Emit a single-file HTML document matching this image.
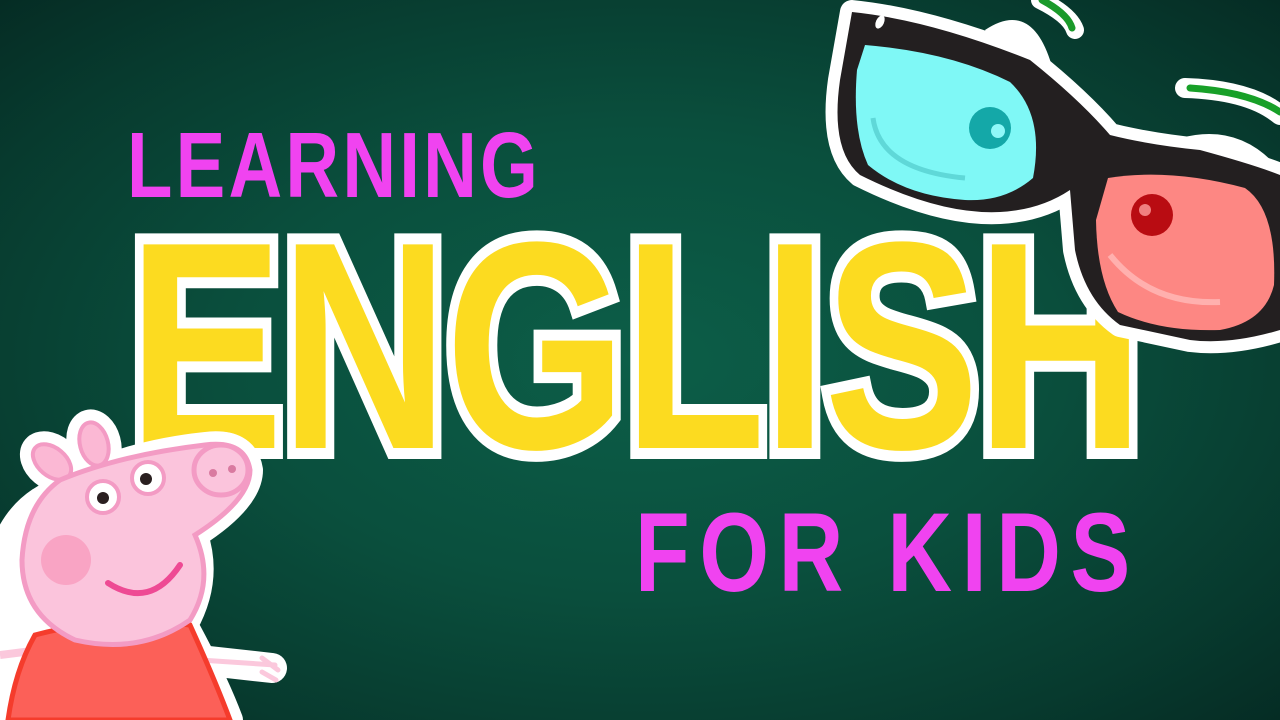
<!DOCTYPE html>
<html><head><meta charset="utf-8"><style>
html,body{margin:0;padding:0}
body{width:1280px;height:720px;overflow:hidden;position:relative;
background:radial-gradient(ellipse at 50% 50%,#0c5e48 0%,#0a4f3d 45%,#073a2e 80%,#052c24 100%);
font-family:"Liberation Sans",sans-serif}
.t{position:absolute;white-space:nowrap;line-height:1;transform-origin:0 0}
#learn{left:127px;top:119px;font-size:93px;color:#f043f0;letter-spacing:4px;font-weight:bold;transform:scaleX(0.8)}
#kids{left:635px;top:497px;font-size:112px;color:#f043f0;letter-spacing:12px;font-weight:bold;transform:scaleX(0.8)}
#eng{left:128px;top:198px;font-size:296px;font-weight:bold;color:#fcdb20;
-webkit-text-stroke:22px #fff;paint-order:stroke fill;transform:scaleX(0.787);letter-spacing:-4px}
svg{position:absolute;left:0;top:0}
</style></head><body>
<div class="t" id="learn">LEARNING</div>
<div class="t" id="eng">ENGLISH</div>
<div class="t" id="kids">FOR KIDS</div>
<svg width="1280" height="720" viewBox="0 0 1280 720">
 <path d="M1040 0 Q1070 15 1075 30" stroke="#fff" stroke-width="18" fill="none" stroke-linecap="round"/>
 <path d="M1042 0 Q1068 14 1072 28" stroke="#1a9a2a" stroke-width="7" fill="none" stroke-linecap="round"/>
 <path d="M1185 88 Q1250 90 1280 115" stroke="#fff" stroke-width="20" fill="none" stroke-linecap="round"/>
 <path d="M1190 88 Q1250 92 1280 112" stroke="#18a028" stroke-width="7" fill="none" stroke-linecap="round"/>
 <path d="M985 30 Q1030 0 1050 60 Q1060 100 1090 120 L1040 120 Z" fill="#fff"/>
 <path d="M1150 150 Q1230 110 1280 170 L1280 200 L1160 175 Z" fill="#fff"/>
 <g stroke-linejoin="round">
  <path d="M852 12 Q930 20 1030 60 Q1080 100 1110 135 Q1150 145 1200 150 Q1255 165 1280 175 L1280 330 Q1230 345 1190 340 L1120 325 Q1085 300 1075 250 L1070 190 Q1040 210 1000 212 Q940 215 860 175 Q830 150 840 80 Z" fill="#fff" stroke="#fff" stroke-width="24"/>
  <path d="M852 12 Q930 20 1030 60 Q1080 100 1110 135 Q1150 145 1200 150 Q1255 165 1280 175 L1280 330 Q1230 345 1190 340 L1120 325 Q1085 300 1075 250 L1070 190 Q1040 210 1000 212 Q940 215 860 175 Q830 150 840 80 Z" fill="#231f20"/>
  <path d="M865 45 Q950 52 1010 82 Q1045 115 1033 178 Q1005 202 965 200 Q905 196 868 165 Q852 130 857 70 Z" fill="#7ff8f6"/>
  <path d="M873 118 Q880 170 965 178" stroke="#5fd8d8" stroke-width="5" fill="none"/>
  <circle cx="990" cy="128" r="21" fill="#14a8a8"/><circle cx="998" cy="131" r="7" fill="#8ff8f8"/>
  <path d="M1108 178 Q1170 168 1245 188 Q1277 210 1274 285 Q1265 322 1220 330 Q1160 332 1118 312 Q1097 280 1096 220 Z" fill="#fd8783"/>
  <path d="M1110 255 Q1150 305 1220 302" stroke="#ffb0ae" stroke-width="6" fill="none"/>
  <circle cx="1152" cy="215" r="21" fill="#b90c12"/><circle cx="1145" cy="210" r="6" fill="#f08080"/>
  <ellipse cx="880" cy="22" rx="4" ry="7" fill="#fff" transform="rotate(25 880 22)"/>
 </g>
 <g fill="#fff" stroke="#fff" stroke-width="26" stroke-linejoin="round" stroke-linecap="round">
  <ellipse cx="52" cy="462" rx="22" ry="14" transform="rotate(40 52 462)"/>
  <ellipse cx="94" cy="444" rx="14" ry="22" transform="rotate(-15 94 444)"/>
  <path d="M40 500 Q110 455 205 445 Q245 440 250 470 Q250 500 195 535 Q210 580 185 625 Q215 680 230 720 L0 720 L0 560 Q10 520 40 500 Z"/>
  <ellipse cx="221" cy="470" rx="27" ry="25"/>
  <path d="M200 660 L272 668" stroke-width="30" fill="none"/>
 </g>
 <g>
  <ellipse cx="52" cy="462" rx="22" ry="14" fill="#fbb8d4" stroke="#f39bc4" stroke-width="4" transform="rotate(40 52 462)"/>
  <ellipse cx="94" cy="444" rx="14" ry="22" fill="#fbb8d4" stroke="#f39bc4" stroke-width="4" transform="rotate(-15 94 444)"/>
  <path d="M200 660 L275 665 M262 658 L278 670 M262 672 L276 680" stroke="#fbc8dc" stroke-width="5" stroke-linecap="round"/>
  <path d="M0 655 L40 650" stroke="#fbc8dc" stroke-width="8"/>
  <path d="M35 635 Q110 615 190 625 Q215 680 230 720 L8 720 Q15 670 35 635 Z" fill="#fc6058" stroke="#f53c2c" stroke-width="5"/>
  <path d="M60 480 Q120 455 205 445 Q245 440 250 470 Q250 500 195 535 Q215 580 190 620 Q140 655 75 640 Q22 615 22 560 Q25 505 60 480 Z" fill="#fbc4dc" stroke="#f39bc4" stroke-width="5"/>
  <ellipse cx="221" cy="470" rx="27" ry="25" fill="#fbc4dc" stroke="#f39bc4" stroke-width="5"/>
  <circle cx="213" cy="473" r="4" fill="#d97aa0"/><circle cx="232" cy="469" r="4" fill="#d97aa0"/>
  <circle cx="103" cy="497" r="16" fill="#fff" stroke="#f39bc4" stroke-width="4"/><circle cx="103" cy="498" r="6" fill="#2a1f20"/>
  <circle cx="148" cy="478" r="16" fill="#fff" stroke="#f39bc4" stroke-width="4"/><circle cx="146" cy="479" r="6" fill="#2a1f20"/>
  <circle cx="66" cy="560" r="25" fill="#f9a4c4"/>
  <path d="M108 583 Q150 610 180 565" stroke="#ee4a94" stroke-width="6" fill="none" stroke-linecap="round"/>
 </g>
</svg>
</body></html>
